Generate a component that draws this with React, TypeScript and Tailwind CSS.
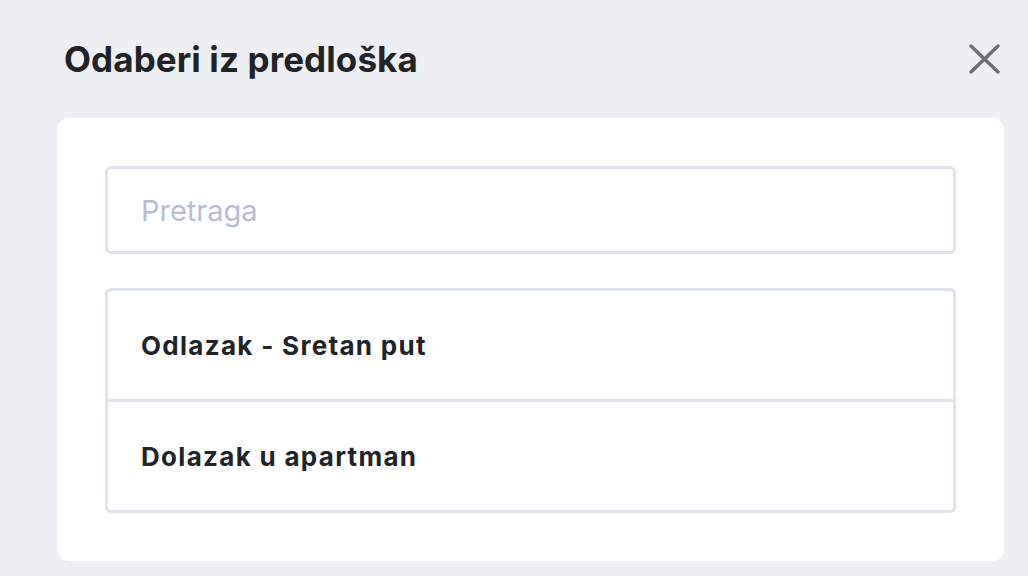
const templates = ["Odlazak - Sretan put", "Dolazak u apartman"];

export default function App() {
    return (
        <div className="w-[1028px] h-[576px] overflow-hidden bg-[#eff0f4] text-[#212327]" style={{ fontFamily: "Inter, 'Noto Sans', sans-serif" }}>
            {/* Header */}
            <div className="flex items-center justify-between h-[118px] pl-[64px] pr-[28px] pb-[1px]">
                <h1 className="text-[35px] font-bold leading-[44px] tracking-[0.1px]">Odaberi iz predloška</h1>
                <button className="text-[#6e6e6e] w-[31px] h-[30px]">
                    <svg viewBox="0 0 31 30" className="w-[31px] h-[30px]" fill="none" stroke="currentColor" strokeWidth={3.4} strokeLinecap="round">
                        <path d="M2 2L29 28M29 2L2 28" />
                    </svg>
                </button>
            </div>

            {/* Card */}
            <div className="ml-[57px] w-[947px] h-[443px] bg-white rounded-[12px] p-[48px] flex flex-col gap-[34px]">
                <input
                    className="h-[89px] w-full border-[3px] border-[#dfe4ee] rounded-[6px] px-[33px] text-[29px] outline-none placeholder:text-[#b4bdd3]"
                    placeholder="Pretraga"
                />
                <div className="border-[3px] border-[#dfe4ee] rounded-[6px] flex flex-col">
                    {templates.map((t, idx) => (
                        <div
                            key={t}
                            className={`h-[108px] flex items-center px-[33px] text-[26px] font-bold tracking-[1.3px] ${idx > 0 ? "border-t-[3px] border-[#dfe4ee] h-[111px]" : ""}`}
                        >
                            {t}
                        </div>
                    ))}
                </div>
            </div>
        </div>
    );
}
